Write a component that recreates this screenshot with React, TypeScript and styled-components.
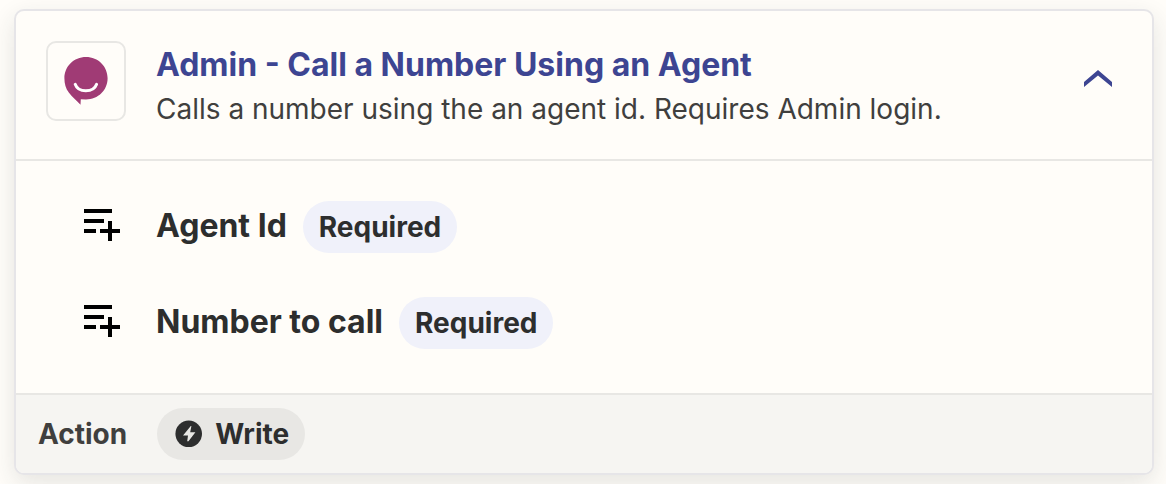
import React, { useState } from "react";
import styled, { createGlobalStyle } from "styled-components";

const GlobalStyle = createGlobalStyle`
  *, *::before, *::after { box-sizing: border-box; }
  body {
    margin: 0;
    background: #fffdf9;
    color: #2d2e2e;
    font-family: Inter, "Liberation Sans", sans-serif;
  }
`;

const Page = styled.main`
  padding: 9px 12px 9px 14px;
`;

const Card = styled.article`
  border: 2px solid #e6e5e8;
  border-radius: 10px;
  overflow: hidden;
  background: #fffdf9;
  box-shadow: 0 8px 24px rgba(45, 46, 46, 0.12);
`;

const Header = styled.button`
  display: flex;
  align-items: flex-start;
  gap: 30px;
  width: 100%;
  padding: 30px 36px 30px 30px;
  border: 0;
  background: transparent;
  color: inherit;
  font: inherit;
  text-align: left;
  cursor: pointer;
`;

const LogoFrame = styled.span`
  display: flex;
  flex: none;
  width: 80px;
  height: 80px;
  border: 2px solid #e8e7e4;
  border-radius: 10px;
`;

const HeaderText = styled.span`
  display: flex;
  flex: 1;
  flex-direction: column;
  min-width: 0;
`;

const Title = styled.span`
  color: #3d4592;
  font-size: 32px;
  font-weight: 700;
  line-height: 48px;
`;

const Description = styled.span`
  color: #403f3e;
  font-size: 28px;
  line-height: 40px;
`;

const ChevronIcon = styled.svg<{ $open: boolean }>`
  flex: none;
  width: 36px;
  height: 36px;
  margin-top: 20px;
  transform: ${({ $open }) => ($open ? "none" : "rotate(180deg)")};
`;

const FieldList = styled.ul`
  display: flex;
  flex-direction: column;
  gap: 44px;
  margin: 0;
  padding: 40px 30px 44px 62px;
  border-top: 2px solid #e8e7e4;
  list-style: none;

  &[hidden] {
    display: none;
  }
`;

const Field = styled.li`
  display: flex;
  align-items: center;
`;

const FieldIcon = styled.svg`
  flex: none;
  width: 48px;
  height: 48px;
  margin-right: 30px;
`;

const FieldName = styled.span`
  margin-right: 16px;
  padding-bottom: 2px;
  font-size: 32px;
  font-weight: 700;
  line-height: 48px;
`;

const Pill = styled.span<{ $tone: "lavender" | "neutral" }>`
  display: inline-flex;
  align-items: center;
  gap: 12px;
  height: 52px;
  padding: 0 16px;
  border-radius: 26px;
  background: ${({ $tone }) => ($tone === "lavender" ? "#f0f1fa" : "#e8e7e4")};
  font-size: 28px;
  font-weight: 700;
  line-height: 40px;
`;

const Footer = styled.footer`
  display: flex;
  align-items: center;
  gap: 30px;
  padding: 13px 22px;
  border-top: 2px solid #e8e7e4;
  background: #f6f5f2;
`;

const FooterLabel = styled.span`
  color: #403f3e;
  font-size: 28px;
  font-weight: 700;
  line-height: 40px;
`;

const BoltIcon = styled.svg`
  flex: none;
  width: 30px;
  height: 30px;
`;

const Logo = () => (
  <svg width="76" height="76" viewBox="0 0 76 76" aria-hidden="true">
    <path
      d="M38 14C50.2 14 59.6 23.5 59.6 35.2C59.6 47 50.2 56.4 38 56.4L32.8 56.2L32.5 61.8C28.8 57.5 24 54 20.8 49.5C17.8 45.5 16.4 40.6 16.4 35.2C16.4 23.5 25.8 14 38 14Z"
      fill="#a03b75"
    />
    <path
      d="M27.2 41.3C28.8 45.8 32.7 47.8 37.8 47.8C43 47.8 47 45.8 48.6 41.3"
      fill="none"
      stroke="#fff"
      strokeWidth="3"
      strokeLinecap="round"
    />
  </svg>
);

const AddFieldIcon = () => (
  <FieldIcon viewBox="0 0 24 24" aria-hidden="true">
    <path
      d="M3 3h14v2H3zM3 8h10v2H3zM3 13h6v2H3zM11 13h4V9h2v4h4v2h-4v4h-2v-4h-4z"
      fill="#000"
    />
  </FieldIcon>
);

const fields = ["Agent Id", "Number to call"];

export default function App() {
  const [open, setOpen] = useState(true);

  return (
    <>
      <GlobalStyle />
      <Page>
        <Card>
          <Header
            type="button"
            aria-expanded={open}
            aria-controls="action-fields"
            onClick={() => setOpen(!open)}
          >
            <LogoFrame>
              <Logo />
            </LogoFrame>
            <HeaderText>
              <Title>Admin - Call a Number Using an Agent</Title>
              <Description>
                Calls a number using the an agent id. Requires Admin login.
              </Description>
            </HeaderText>
            <ChevronIcon $open={open} viewBox="0 0 36 36" aria-hidden="true">
              <path d="M4 21L18 9L32 21V26L18 14.5L4 26Z" fill="#3d4592" />
            </ChevronIcon>
          </Header>
          <FieldList id="action-fields" hidden={!open}>
            {fields.map((name) => (
              <Field key={name}>
                <AddFieldIcon />
                <FieldName>{name}</FieldName>
                <Pill $tone="lavender">Required</Pill>
              </Field>
            ))}
          </FieldList>
          <Footer>
            <FooterLabel>Action</FooterLabel>
            <Pill $tone="neutral">
              <BoltIcon viewBox="0 0 30 30" aria-hidden="true">
                <circle cx="15.7" cy="14.8" r="13.3" fill="#2d2e2e" />
                <path
                  d="M17.8 7L10 16.4H15L14.2 22.2H15.5L22.4 13.2H17.2L18.4 7Z"
                  fill="#e8e7e4"
                />
              </BoltIcon>
              Write
            </Pill>
          </Footer>
        </Card>
      </Page>
    </>
  );
}
